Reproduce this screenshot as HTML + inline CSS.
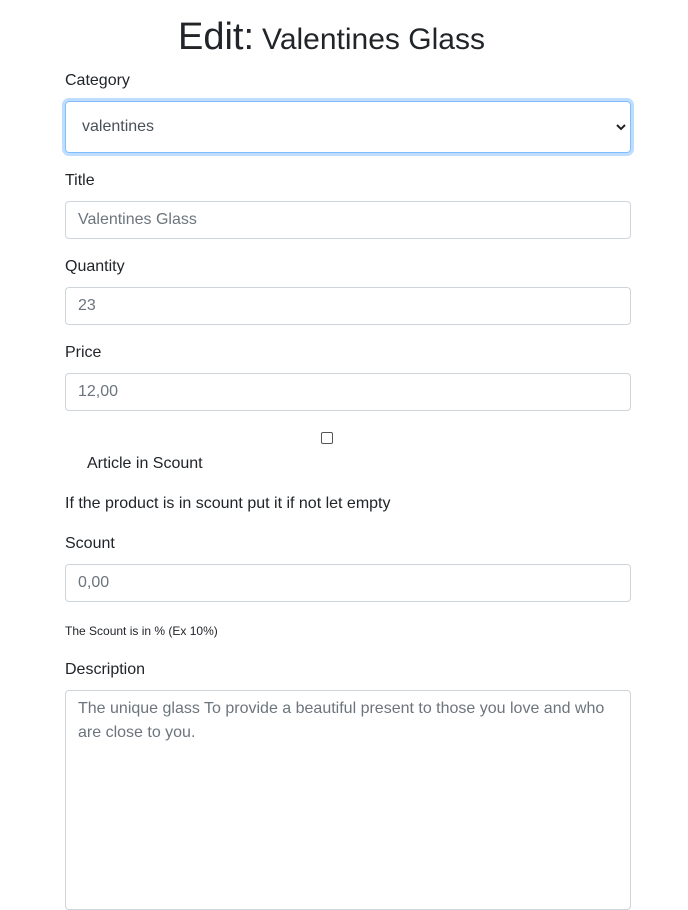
<!DOCTYPE html>
<html><head><meta charset="utf-8"><style>
*{box-sizing:border-box}
html,body{margin:0;width:688px;height:882px;overflow:hidden;background:#fff;font-family:"Liberation Sans",sans-serif;color:#212529;font-size:16px}
.a{position:absolute;white-space:nowrap}
.lbl{left:65px;font-size:16px;color:#212529}
.inp{position:absolute;left:65px;width:566px;height:38px;border:1px solid #ced4da;border-radius:4px;padding:0 12px;line-height:36px;color:#6c757d;font-size:16px}
</style></head><body>
<div class="a" style="left:178px;top:13px;font-size:38px;font-weight:300;line-height:48px">Edit:<span style="font-size:30px;margin-left:8px">Valentines Glass</span></div>
<div class="a lbl" style="top:72px">Category</div>
<div class="inp" style="top:101px;height:52px;line-height:50px;border-color:#80bdff;box-shadow:0 0 0 3px rgba(0,123,255,.25);padding-left:16px;color:#495057">valentines
<svg style="position:absolute;right:4px;top:20px" width="10" height="10" viewBox="0 0 10 10"><path d="M1 3l4 4 4-4" fill="none" stroke="#222" stroke-width="2"/></svg></div>
<div class="a lbl" style="top:172px">Title</div>
<div class="inp" style="top:201px;height:38px">Valentines Glass</div>
<div class="a lbl" style="top:258px">Quantity</div>
<div class="inp" style="top:287px">23</div>
<div class="a lbl" style="top:344px">Price</div>
<div class="inp" style="top:373px">12,00</div>
<div class="a" style="left:321px;top:432px;width:12px;height:12px;border:1px solid #555;border-radius:2px"></div>
<div class="a" style="left:87px;top:455px">Article in Scount</div>
<div class="a lbl" style="top:495px">If the product is in scount put it if not let empty</div>
<div class="a lbl" style="top:535px">Scount</div>
<div class="inp" style="top:564px">0,00</div>
<div class="a lbl" style="top:624px;font-size:12px">The Scount is in % (Ex 10%)</div>
<div class="a lbl" style="top:661px">Description</div>
<div class="inp" style="top:690px;height:220px;line-height:24px;padding-top:6px;white-space:normal">The unique glass To provide a beautiful present to those you love and who are close to you.</div>
</body></html>
